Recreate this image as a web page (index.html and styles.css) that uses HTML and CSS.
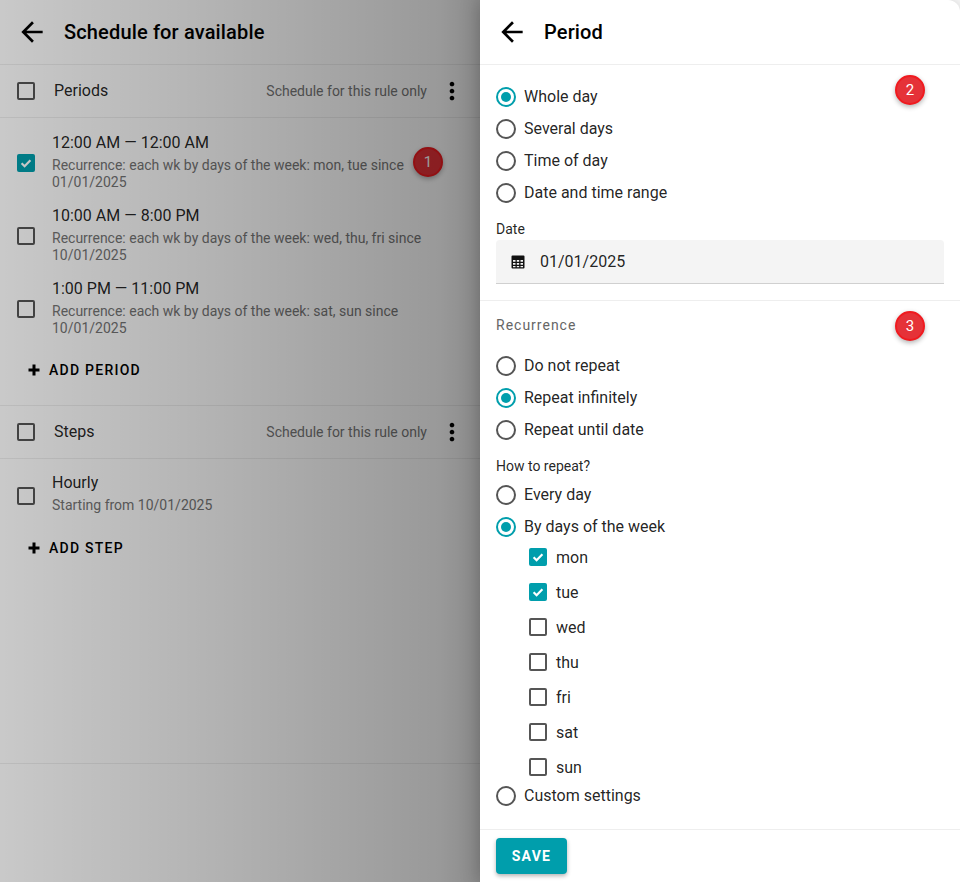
FILE: index.html
```html
<!DOCTYPE html>
<html lang="en">
<head>
<meta charset="utf-8">
<title>Period</title>
<link rel="stylesheet" href="styles.css">
</head>
<body>
<svg class="defs" width="0" height="0" aria-hidden="true">
  <symbol id="back" viewBox="0 0 24 24"><path d="M20 11H7.83l5.59-5.59L12 4l-8 8 8 8 1.41-1.41L7.83 13H20v-2z"/></symbol>
  <symbol id="more" viewBox="0 0 24 24"><path d="M12 8c1.1 0 2-.9 2-2s-.9-2-2-2-2 .9-2 2 .9 2 2 2zm0 2c-1.1 0-2 .9-2 2s.9 2 2 2 2-.9 2-2-.9-2-2-2zm0 6c-1.1 0-2 .9-2 2s.9 2 2 2 2-.9 2-2-.9-2-2-2z"/></symbol>
  <symbol id="tick" viewBox="0 0 18 18"><path d="M4.6 9.2l3 3 5.8-6" fill="none" stroke="#fff" stroke-width="2.2"/></symbol>
  <symbol id="plus" viewBox="0 0 12 12"><path d="M4.5 0.5h3v4h4v3h-4v4h-3v-4h-4v-3h4z"/></symbol>
</svg>
<div class="page">
  <section class="left">
    <header class="head">
      <svg class="back"><use href="#back"/></svg>
      <h1 class="title">Schedule for available</h1>
    </header>

    <div class="group-head">
      <span class="box"></span>
      <span class="group-name">Periods</span>
      <span class="group-note">Schedule for this rule only</span>
      <svg class="more"><use href="#more"/></svg>
    </div>
    <div class="group-body periods">
      <div class="item">
        <span class="box box-dim-on"><svg class="tick"><use href="#tick"/></svg></span>
        <div class="item-text">
          <div class="item-title">12:00 AM — 12:00 AM</div>
          <div class="item-sub">Recurrence: each wk by days of the week: mon, tue since 01/01/2025</div>
        </div>
      </div>
      <div class="item">
        <span class="box"></span>
        <div class="item-text">
          <div class="item-title">10:00 AM — 8:00 PM</div>
          <div class="item-sub">Recurrence: each wk by days of the week: wed, thu, fri since 10/01/2025</div>
        </div>
      </div>
      <div class="item">
        <span class="box"></span>
        <div class="item-text">
          <div class="item-title">1:00 PM — 11:00 PM</div>
          <div class="item-sub">Recurrence: each wk by days of the week: sat, sun since 10/01/2025</div>
        </div>
      </div>
      <button class="add add-period" type="button"><svg class="plus"><use href="#plus"/></svg>ADD PERIOD</button>
    </div>

    <div class="group-head">
      <span class="box"></span>
      <span class="group-name">Steps</span>
      <span class="group-note">Schedule for this rule only</span>
      <svg class="more"><use href="#more"/></svg>
    </div>
    <div class="group-body steps">
      <div class="item item-short">
        <span class="box"></span>
        <div class="item-text">
          <div class="item-title">Hourly</div>
          <div class="item-sub">Starting from 10/01/2025</div>
        </div>
      </div>
      <button class="add add-step" type="button"><svg class="plus"><use href="#plus"/></svg>ADD STEP</button>
    </div>

    <span class="badge badge-one">1</span>
    <div class="overlay"></div>
  </section>

  <aside class="panel">
    <header class="head">
      <svg class="back"><use href="#back"/></svg>
      <h1 class="title">Period</h1>
    </header>

    <div class="block block-date">
      <div class="radios">
        <label class="radio"><span class="dot on"></span>Whole day</label>
        <label class="radio"><span class="dot"></span>Several days</label>
        <label class="radio"><span class="dot"></span>Time of day</label>
        <label class="radio"><span class="dot"></span>Date and time range</label>
      </div>
      <div class="field-label">Date</div>
      <div class="field">
        <svg class="cal" viewBox="0 0 14 14">
          <path d="M1.5 0.5h11a1 1 0 0 1 1 1v11a1 1 0 0 1-1 1h-11a1 1 0 0 1-1-1v-11a1 1 0 0 1 1-1z"/>
          <path fill="#f4f4f4" d="M2 5h2.5v1.8H2zM5.8 5h2.4v1.8H5.8zM9.5 5H12v1.8H9.5zM2 8h2.5v1.8H2zM5.8 8h2.4v1.8H5.8zM9.5 8H12v1.8H9.5zM2 11h2.5v1.2H2zM5.8 11h2.4v1.2H5.8zM9.5 11H12v1.2H9.5z"/>
        </svg>
        <span>01/01/2025</span>
      </div>
      <span class="badge badge-two">2</span>
    </div>

    <div class="block block-rec">
      <div class="rec-title">Recurrence</div>
      <div class="radios rec-radios">
        <label class="radio"><span class="dot"></span>Do not repeat</label>
        <label class="radio"><span class="dot on"></span>Repeat infinitely</label>
        <label class="radio"><span class="dot"></span>Repeat until date</label>
      </div>
      <div class="field-label how">How to repeat?</div>
      <div class="radios">
        <label class="radio"><span class="dot"></span>Every day</label>
        <label class="radio"><span class="dot on"></span>By days of the week</label>
      </div>
      <div class="days">
        <label class="day"><span class="box box-on"><svg class="tick"><use href="#tick"/></svg></span>mon</label>
        <label class="day"><span class="box box-on"><svg class="tick"><use href="#tick"/></svg></span>tue</label>
        <label class="day"><span class="box"></span>wed</label>
        <label class="day"><span class="box"></span>thu</label>
        <label class="day"><span class="box"></span>fri</label>
        <label class="day"><span class="box"></span>sat</label>
        <label class="day"><span class="box"></span>sun</label>
      </div>
      <label class="radio custom"><span class="dot"></span>Custom settings</label>
      <span class="badge badge-three">3</span>
    </div>

    <footer class="foot">
      <button class="save" type="button">SAVE</button>
    </footer>
  </aside>
</div>
</body>
</html>
```

FILE: styles.css
```css
* { box-sizing: border-box; }
html, body { margin: 0; padding: 0; height: 882px; overflow: hidden; }
body { font-family: Roboto, "Liberation Sans", sans-serif; color: rgba(0, 0, 0, 0.87); background: #fff; }
.defs { position: absolute; }
.page { display: flex; height: 882px; }

.left { position: relative; width: 480px; height: 882px; background: #fff; flex: none; }
.overlay {
  position: absolute; inset: 0; pointer-events: none;
  background: linear-gradient(90deg, rgba(0,0,0,.21) 0, rgba(0,0,0,.30) 220px, rgba(0,0,0,.40) 440px, rgba(0,0,0,.46) 480px);
}

.head { display: flex; align-items: center; gap: 16px; height: 65px; padding-left: 16px; border-bottom: 1px solid #eee; }
.back { width: 32px; height: 32px; fill: #000; flex: none; }
.title { margin: 0; font-size: 20px; font-weight: 500; line-height: 24px; letter-spacing: .15px; color: #000; }

.group-head { display: flex; align-items: center; height: 53px; padding: 0 14px 0 17px; border-bottom: 1px solid #eee; }
.group-name { margin-left: 19px; font-size: 16px; line-height: 24px; }
.group-note { margin-left: auto; font-size: 14px; line-height: 20px; color: #757575; }
.more { width: 28px; height: 28px; margin-left: 11px; fill: #000; flex: none; }

.box { display: inline-block; width: 18px; height: 18px; border: 2px solid #555; border-radius: 2px; flex: none; background: transparent; }
.box-on, .box-dim-on { border: 0; background: #009eac; }
.tick { display: block; width: 18px; height: 18px; }

.group-body { border-bottom: 1px solid #eee; padding-top: 6px; }
.periods { height: 288px; }
.steps { height: 305px; }
.item { display: flex; align-items: center; height: 73px; padding: 0 50px 0 17px; }
.item-short { height: 55px; }
.item .box { margin-top: 5px; }
.item-short .box { margin-top: 7px; }
.item-text { margin-left: 17px; }
.item-title { font-size: 16px; line-height: 24px; }
.item-sub { margin-top: 2px; font-size: 14px; line-height: 17px; color: #757575; }

.add {
  display: flex; align-items: center; height: 36px; padding: 0 0 0 28px; border: 0; background: none; color: #000;
  font: 500 14px/20px Roboto, sans-serif; letter-spacing: 1.25px;
}
.add-period { margin-top: 9px; }
.add-step { margin-top: 10px; }
.plus { width: 12px; height: 12px; margin-right: 9px; fill: #000; flex: none; }

.badge {
  position: absolute; z-index: 2; display: flex; align-items: center; justify-content: center;
  width: 30px; height: 30px; border-radius: 50%; border: 2px solid #f01a1f; background: #e53238;
  color: #fff; font-size: 15px; line-height: 1; box-shadow: 0 2px 5px rgba(0,0,0,.3);
}
.badge-one { z-index: 0; left: 413px; top: 147px; }
.badge-two { left: 415px; top: 10px; }
.badge-three { left: 415px; top: 10px; }

.panel { position: relative; z-index: 1; display: flex; flex-direction: column; width: 480px; height: 882px; background: #fff; border-top-right-radius: 12px; box-shadow: 0 0 20px rgba(0,0,0,.25); flex: none; }
.block { position: relative; padding: 0 16px; border-bottom: 1px solid #eee; }
.block-date { padding-top: 18px; padding-bottom: 16px; }
.block-rec { padding-top: 14px; border-bottom: 0; }

.radios { display: flex; flex-direction: column; gap: 4px; }
.radio { display: flex; align-items: center; height: 28px; font-size: 16px; line-height: 24px; }
.dot { position: relative; display: block; width: 20px; height: 20px; margin-right: 8px; border: 2px solid #555; border-radius: 50%; flex: none; }
.dot.on { border-color: #009eac; }
.dot.on::after { content: ""; position: absolute; left: 3px; top: 3px; width: 10px; height: 10px; border-radius: 50%; background: #009eac; }

.field-label { margin-top: 12px; font-size: 14px; line-height: 20px; }
.field { display: flex; align-items: center; height: 44px; margin-top: 1px; padding-left: 15px; background: #f4f4f4; border-bottom: 1px solid #d0d0d0; border-radius: 4px 4px 0 0; font-size: 16px; }
.cal { width: 14px; height: 14px; margin-right: 15px; fill: #111; flex: none; }

.rec-title { font-size: 14px; line-height: 20px; letter-spacing: 1px; color: #666; }
.rec-radios { margin-top: 17px; }
.how { margin-bottom: 5px; }

.days { display: flex; flex-direction: column; gap: 7px; margin-top: 2px; padding-left: 33px; }
.day { display: flex; align-items: center; height: 28px; font-size: 16px; }
.day .box { margin-right: 9px; }
.custom { margin-top: 1px; }

.foot { margin-top: auto; height: 53px; padding: 8px 16px 0; border-top: 1px solid #eee; }
.save {
  display: block; width: 71px; height: 36px; border: 0; border-radius: 4px; background: #009eac; color: #fff;
  font: 700 14px/20px Roboto, sans-serif; letter-spacing: 1.25px; box-shadow: 0 2px 4px rgba(0,0,0,.3);
}
```
